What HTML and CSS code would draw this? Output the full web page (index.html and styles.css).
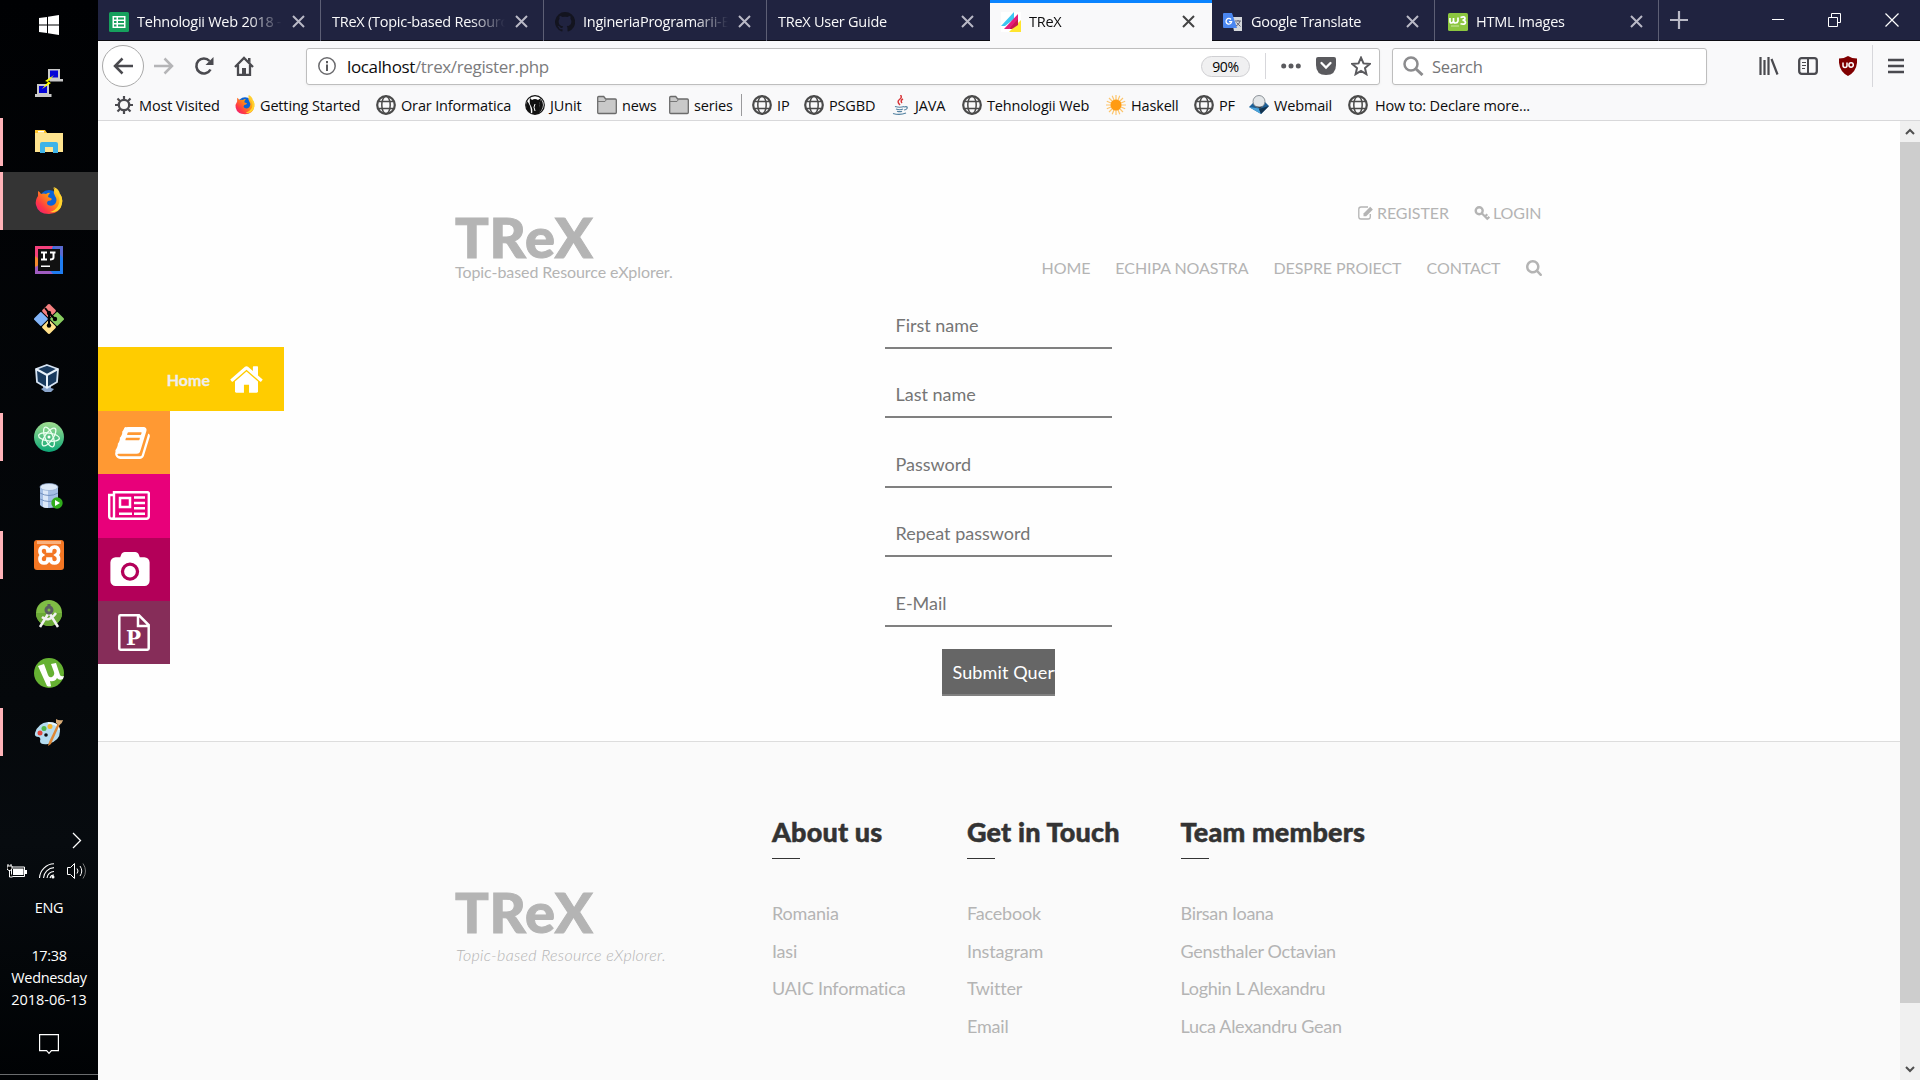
FILE: index.html
```html
<!DOCTYPE html>
<html lang="en">
<head>
<meta charset="utf-8">
<title>TReX</title>
<link rel="stylesheet" href="styles.css">
</head>
<body>
<svg class="defs" aria-hidden="true">
  <symbol id="x" viewBox="0 0 13 13"><path d="M1 1l11 11M12 1L1 12" fill="none" stroke="currentColor" stroke-width="2"/></symbol>
  <symbol id="globe" viewBox="0 0 20 20"><g fill="none" stroke="#4a4a4a"><circle cx="10" cy="10" r="8.800" stroke-width="2.200"/><ellipse cx="10" cy="10" rx="4.200" ry="8.800" stroke-width="1.500"/><path d="M2.500 6.500h15M2.500 13.500h15" stroke-width="1.400"/></g></symbol>
  <symbol id="folder" viewBox="0 0 20 20"><path d="M.7 17.500v-15q0-1 1-1h5l2 2.500h9.600q1 0 1 1v12.500q0 1-1 1H1.700q-1 0-1-1z" fill="#c9c9c9" stroke="#6b6b6b" stroke-width="1.300"/><path d="M1 6.500h7l1.500-2" fill="none" stroke="#777"/></symbol>
  <symbol id="firefox" viewBox="0 0 28 28"><defs><linearGradient id="fx" x1="1" y1="0" x2="0" y2="1"><stop offset="0" stop-color="#fff44f"/><stop offset=".4" stop-color="#ff980e"/><stop offset=".75" stop-color="#ff3647"/><stop offset="1" stop-color="#e31587"/></linearGradient></defs><circle cx="14" cy="13" r="10" fill="#0a63d8"/><path d="M3 4q2 1 3 3 3-1 5 0 3-2 4-1-2 2-2 4 3 1 4 2-1 2-4 2-2 2 0 4 4 2 7-1 3-4 0-8-2-3-1-5 1-3 0-4 5 2 6 7 3 4 2 9-2 11-13 11T1 18Q0 13 3 9z" fill="url(#fx)"/><path d="M18 0q1 4 5 8 3 5 0 11-3 5-8 6 8 1 11-5 3-8-1-13l-1 1q-3-5-6-8z" fill="#ffd42e"/></symbol>
</svg>

<aside class="taskbar">
  <div class="slot start"><svg width="20" height="20" viewBox="0 0 20 20"><path d="M0 3l8-1v7.500H0zM9 1.800L20 0v9.500H9zM0 10.500h8V18l-8-1zM9 10.500h11V20L9 18.300z" fill="#fff"/></svg></div>
  <div class="slot"><svg width="28" height="28" viewBox="0 0 28 28"><path d="M13 0h12v10h3v2.500H15L13 10z" fill="#c9c9c9"/><path d="M15 1.500h8v7h-8z" fill="#0404d8"/><path d="M2 15h12v10h2.500v3H0v-3h2z" fill="#c9c9c9"/><path d="M4 17h8v7H4z" fill="#0404d8"/><path d="M19 6l-9 6 3 1-6 7 9-6-3-1.500z" fill="#ff0"/></svg></div>
  <div class="slot running"><svg width="28" height="24" viewBox="0 0 28 24"><path d="M0 1h9l3 2h16v19H0z" fill="#ffe48f"/><path d="M0 0h10l2 3H0z" fill="#ffc52e"/><path d="M3 1h6v1.500H3z" fill="#fff"/><path d="M5 23V14q0-2 2-2h14q2 0 2 2v9h-5v-6h-8v6z" fill="#3eb3e8"/></svg></div>
  <div class="slot running active"><svg width="28" height="28"><use href="#firefox"/></svg></div>
  <div class="slot"><svg width="28" height="28" viewBox="0 0 28 28"><path d="M0 0h28v28H0z" fill="#1f7cf0"/><path d="M0 0h18l-10 28H0z" fill="#f5417d"/><path d="M0 10l6 5-2 13H0z" fill="#f58a2e"/><path d="M0 21l8-4 10 11H0z" fill="#a05cc0"/><path d="M18 0h10v12z" fill="#5a6ad0"/><path d="M3 3h22v22H3z" fill="#111"/><path d="M6 6.500h6M9 6.500v7M6 13.500h6M15 6.500h5.500M18.500 6.500v5q0 2-3.500 2" stroke="#fff" stroke-width="2" fill="none"/><path d="M6 19.500h9V21H6z" fill="#fff"/></svg></div>
  <div class="slot"><svg width="30" height="30" viewBox="0 0 30 30"><g transform="rotate(45 15 15)"><rect x="4" y="4" width="10.500" height="10.500" rx="1.500" fill="#f58080"/><rect x="15.500" y="4" width="10.500" height="10.500" rx="1.500" fill="#88cc60"/><rect x="4" y="15.500" width="10.500" height="10.500" rx="1.500" fill="#82b4f8"/><rect x="15.500" y="15.500" width="10.500" height="10.500" rx="1.500" fill="#ffe08a"/></g><path d="M15 8v14M15 9l6 6M11 4l4 5" stroke="#000" stroke-width="2"/><circle cx="15" cy="9" r="2.200"/><circle cx="21" cy="15" r="2.200"/><circle cx="15" cy="21.500" r="2.200"/></svg></div>
  <div class="slot vbox"><svg width="26" height="28" viewBox="0 0 26 28"><path d="M9 21h8v3l3 1-3 3h-6l-4-3 2-1z" fill="#8aa5cc"/><path d="M13 1l11 4-1 13-10 6-10-6L2 5z" fill="#193a5e" stroke="#d5e3f3" stroke-width="1.800"/><path d="M2 5l11 6 11-6M13 11v13" fill="none" stroke="#e9f2fb" stroke-width="2"/></svg></div>
  <div class="slot running"><svg width="30" height="30" viewBox="0 0 30 30"><defs><linearGradient id="at" x2="0" y2="1"><stop stop-color="#a0dd90"/><stop offset="1" stop-color="#0da777"/></linearGradient></defs><circle cx="15" cy="15" r="15" fill="url(#at)"/><g fill="none" stroke="#eafff0" stroke-width="1.300"><ellipse cx="15" cy="15" rx="10.500" ry="4" transform="rotate(8 15 15)"/><ellipse cx="15" cy="15" rx="10.500" ry="4" transform="rotate(68 15 15)"/><ellipse cx="15" cy="15" rx="10.500" ry="4" transform="rotate(125 15 15)"/></g><circle cx="15" cy="15" r="1.500" fill="#fff"/></svg></div>
  <div class="slot db"><svg width="24" height="26" viewBox="0 0 24 26"><path d="M1 4v18q2 3 9 3t9-3V4z" fill="#a5bfe5"/><path d="M4 5h5v20q-4 0-5-1z" fill="#dce8f8"/><ellipse cx="10" cy="4" rx="9" ry="3.500" fill="#dde9f8" stroke="#8fa9cf" stroke-width=".7"/><path d="M1 10q9 5 18 0M1 16q9 5 18 0" fill="none" stroke="#7391c0"/><circle cx="18" cy="20" r="5.700" fill="#30ad1c"/><path d="M16 17l5 3-5 3z" fill="#fff"/></svg></div>
  <div class="slot running"><svg width="30" height="30" viewBox="0 0 30 30"><rect width="30" height="30" rx="3" fill="#f37623"/><path d="M3 1h24v3H3z" fill="#f9b07c"/><path d="M10 7c-5 0-5 6-2 8-3 2-3 8 2 8 3 0 4-2 4-4h2.500c0 2 1 4 4 4 5 0 5-6 2-8 3-2 3-8-2-8-3 0-4 2-4 4H14c0-2-1-4-4-4z" fill="none" stroke="#fff" stroke-width="3.600"/></svg></div>
  <div class="slot"><svg width="26" height="28" viewBox="0 0 26 28"><circle cx="13" cy="13" r="13" fill="#7fbd45"/><path d="M0 13h26a13 13 0 0 1-26 0z" fill="#6aa836"/><path d="M12 14L4 27M14 14l8 13M6 17q7 6 14-4" fill="none" stroke="#f1f1f1" stroke-width="2.500"/><circle cx="13" cy="10" r="3" fill="none" stroke="#5b5f60" stroke-width="3"/><path d="M11.500 4h3v4h-3z" fill="#5b5f60"/></svg></div>
  <div class="slot"><svg width="30" height="30" viewBox="0 0 30 30"><circle cx="15" cy="15" r="15" fill="#65b132"/><path d="M4 8l6-2 4 11q1 3 4 2 3-2 2-5l-3-8 5-1 4 12q1 2 4 1l-1 3q-4 2-6-1-2 4-7 3l1 5q-1 1-4 0z" fill="#fff"/></svg></div>
  <div class="slot running"><svg width="30" height="28" viewBox="0 0 30 28"><path d="M14 4q12 0 12 9 0 10-12 13-8 1-8-3 1-3-1-4-5 0-4-4Q4 5 14 4z" fill="#b5dcf0"/><path d="M14 5q10 0 11 7" stroke="#e9f7fd" fill="none" stroke-width="2"/><circle cx="6" cy="15" r="2.500" fill="#e2483d"/><circle cx="10" cy="10.500" r="2.500" fill="#54ba4b"/><circle cx="16" cy="8.500" r="2.500" fill="#f7b52c"/><circle cx="12" cy="17" r="1.800" fill="#0a0c10"/><path d="M24 5l2 1-9 20-3 2 1-4z" fill="#dd8736"/><path d="M22 1q3 2 7 1-1 4-4 5l-3-2z" fill="#d8ab77"/></svg></div>
  <div class="tray">
    <svg class="chev" width="10" height="17" viewBox="0 0 10 17"><path d="M1 1l7.500 7.500L1 16" fill="none" stroke="#fff" stroke-width="1.300"/></svg>
    <div class="trayicons">
      <svg width="20" height="14" viewBox="0 0 20 14"><path d="M4.500 3h13v9.500h-13z" fill="none" stroke="#fff"/><path d="M6 4.500h10.500V11H6z" fill="#fff"/><path d="M18 6h2v4h-2z" fill="#fff"/><path d="M0 2h5v3q-1 1.500-2.500 1.500T0 5zM1 0v2M4 0v2M2.500 6v7h3" fill="#000" stroke="#fff"/></svg>
      <svg width="16" height="16" viewBox="0 0 16 16"><g fill="none" stroke="#fff" stroke-width="1.100"><path d="M.5 15A15 15 0 0 1 15 .8M4.500 15A11 11 0 0 1 15 4.600M8 15a7 7 0 0 1 7-6.500M11 15a4 4 0 0 1 4-3"/></g><circle cx="14" cy="14" r="1.500" fill="#fff"/></svg>
      <svg width="20" height="18" viewBox="0 0 20 18"><path d="M.5 5.500h3l4-4v15l-4-4h-3z" fill="none" stroke="#fff"/><path d="M10 6.500q2 2.500 0 5M13 4q3.500 5 0 10" fill="none" stroke="#fff"/><path d="M16 1.500q5 7.500 0 15" fill="none" stroke="#777"/></svg>
    </div>
    <div class="lang"><span>ENG</span></div>
    <div class="clock"><span>17:38</span><span>Wednesday</span><span class="date">2018-06-13</span></div>
    <svg class="note" width="20" height="21" viewBox="0 0 20 21"><path d="M.600.600h18.800v16h-7l-2.400 2.800-2.400-2.800h-7z" fill="none" stroke="#fff" stroke-width="1.200"/></svg>
  </div>
</aside>

<main class="window">
  <div class="tabs">
    <div class="tab"><svg width="20" height="20" viewBox="0 0 20 20"><rect width="20" height="20" rx="1.500" fill="#16a05d"/><path d="M3.500 4h13v12h-13z" fill="#fff"/><path d="M5 5.500h2.500v2H5zM9 5.500h6v2H9zM5 9h2.500v2H5zM9 9h6v2H9zM5 12.500h2.500v2H5zM9 12.500h6v2H9z" fill="#16a05d"/></svg><span class="label"><span>Tehnologii Web 2018 - </span></span><svg class="cl"><use href="#x"/></svg></div>
    <div class="tab"><span class="label"><span>TReX (Topic-based Resource</span></span><svg class="cl"><use href="#x"/></svg></div>
    <div class="tab"><svg width="20" height="20" viewBox="0 0 16 16"><path d="M8 0a8 8 0 0 0-2.500 15.600c.4 0 .5-.2.500-.4v-1.500c-2.200.5-2.700-1-2.700-1-.4-.9-.9-1.200-.9-1.200-.7-.5.100-.5.100-.5.800.1 1.200.8 1.200.8.700 1.300 1.900.9 2.300.7.100-.5.300-.9.500-1.100-1.800-.2-3.600-.9-3.600-4 0-.9.300-1.600.8-2.100-.1-.2-.4-1 .1-2.100 0 0 .7-.2 2.200.8a7.500 7.500 0 0 1 4 0c1.500-1 2.200-.8 2.200-.8.400 1.100.2 1.900.1 2.100.5.600.8 1.300.8 2.100 0 3.100-1.900 3.800-3.700 4 .3.300.6.800.6 1.500v2.300c0 .2.100.5.600.4A8 8 0 0 0 8 0z" fill="#13141f"/></svg><span class="label"><span>IngineriaProgramarii-E</span></span><svg class="cl"><use href="#x"/></svg></div>
    <div class="tab"><span class="label"><span>TReX User Guide</span></span><svg class="cl"><use href="#x"/></svg></div>
    <div class="tab on"><svg width="20" height="20" viewBox="0 0 20 20"><path d="M0 0h20v20H0z" fill="#fff"/><path d="M13 0v7L4 14H0z" fill="#3ec6f2"/><path d="M17 2v9L8 17H3z" fill="#e51d79"/><path d="M20 8v12H8z" fill="#ffe52e"/><path d="M17 7v6l-6 4-3 0z" fill="#c9174f"/></svg><span class="label"><span>TReX</span></span><svg class="cl"><use href="#x"/></svg></div>
    <div class="tab"><svg width="20" height="20" viewBox="0 0 20 20"><path d="M8 5h11v14H11z" fill="#d5d8dc"/><path d="M1 1h8l5 15H1q-1 0-1-1V2q0-1 1-1z" fill="#4a86f0"/><path d="M8 7.500a2.800 2.800 0 1 0 .6 2.200H6" fill="none" stroke="#fff" stroke-width="1.300"/><path d="M12 9h6M15 8v1M17 9q-1 4-4 5M13.500 10.500l4 4" stroke="#667" fill="none"/></svg><span class="label"><span>Google Translate</span></span><svg class="cl"><use href="#x"/></svg></div>
    <div class="tab last"><svg width="20" height="18" viewBox="0 0 20 18"><rect width="20" height="18" rx="1.500" fill="#8cc63f"/><path d="M2 5v3q0 2 1.500 2T5.500 8V5v3q0 2 2 2T10 8V4.500M12.500 4.500q4-1.500 4.500.7 0 2-2.500 2 3 .3 3 2.300-.5 2.500-5 1.300" fill="none" stroke="#fff" stroke-width="1.700"/><path d="M3 13h8" stroke="#cbe6a5"/></svg><span class="label"><span>HTML Images</span></span><svg class="cl"><use href="#x"/></svg></div>
    <svg class="plus" width="18" height="18" viewBox="0 0 18 18"><path d="M9 0v18M0 9h18" stroke="#b9b9c6" stroke-width="2.200"/></svg>
    <div class="controls">
      <svg width="14" height="14" viewBox="0 0 14 14"><path d="M1 6.500h12" stroke="#fff"/></svg>
      <svg width="14" height="14" viewBox="0 0 14 14"><path d="M.500 4.500h9v9h-9zM3.500 4.500v-4h9v9h-3" fill="none" stroke="#fff"/></svg>
      <svg width="14" height="14" viewBox="0 0 14 14"><path d="M.500.500l13 13M13.500.500l-13 13" stroke="#fff" stroke-width="1.200"/></svg>
    </div>
  </div>

  <div class="nav">
    <div class="back"><svg width="20" height="18" viewBox="0 0 20 18"><path d="M20 9H2M9.500 1.500L2 9l7.500 7.500" fill="none" stroke="#4a4a4f" stroke-width="2.500"/></svg></div>
    <svg class="fwd" width="20" height="18" viewBox="0 0 20 18"><path d="M0 9h18M10.500 1.500L18 9l-7.500 7.500" fill="none" stroke="#b5b5b7" stroke-width="2.500"/></svg>
    <svg class="reload" width="20" height="20" viewBox="0 0 20 20"><path d="M16.500 13.500A7.500 7.500 0 1 1 15.500 5" fill="none" stroke="#4a4a4f" stroke-width="2.600"/><path d="M19.500 1v8h-8z" fill="#4a4a4f"/></svg>
    <svg class="hm" width="20" height="20" viewBox="0 0 20 20"><path d="M1 11L10 2l9 9M4 9v10h12V9" fill="none" stroke="#4a4a4f" stroke-width="2.300"/><path d="M8 19v-7h4v7z" fill="#4a4a4f"/><path d="M14 2h2.500v5L14 4.500z" fill="#4a4a4f"/></svg>
    <div class="url">
      <svg width="18" height="18" viewBox="0 0 18 18"><circle cx="9" cy="9" r="8.200" fill="none" stroke="#6b6b6e" stroke-width="1.500"/><path d="M8 4h2v2.200H8zM8 7.500h2V14H8z" fill="#5b5b5e"/></svg>
      <span class="addr">localhost<i>/trex/register.php</i></span>
      <span class="zoom"><span>90%</span></span>
      <b class="sep"></b>
      <svg class="dots" width="20" height="6" viewBox="0 0 20 6"><g fill="#5a5a5e"><circle cx="2.700" cy="3" r="2.500"/><circle cx="10" cy="3" r="2.500"/><circle cx="17.300" cy="3" r="2.500"/></g></svg>
      <svg class="pocket" width="20" height="18" viewBox="0 0 20 18"><path d="M2 0h16q2 0 2 2v6q0 10-10 10T0 8V2q0-2 2-2z" fill="#5a5a5e"/><path d="M5.500 6l4.500 4.500L14.500 6" fill="none" stroke="#fff" stroke-width="2.300" stroke-linecap="round"/></svg>
      <svg class="star" width="20" height="20" viewBox="0 0 20 20"><path d="M10 1.700l2.500 5.700 6.200.6-4.700 4.100 1.400 6.100L10 15l-5.400 3.200L6 12.100 1.300 8l6.200-.6z" fill="none" stroke="#5a5a5e" stroke-width="2"/></svg>
    </div>
    <div class="search"><svg width="21" height="20" viewBox="0 0 21 20"><circle cx="8" cy="8" r="6.500" fill="none" stroke="#8c8c8e" stroke-width="2.500"/><path d="M12.500 12.500l7 6.500" stroke="#8c8c8e" stroke-width="3"/></svg><span>Search</span></div>
    <svg class="lib" width="20" height="18" viewBox="0 0 20 18"><path d="M1.500 0v18M5.500 3v15M9.500 0v18M12.500 2l6 15.500" stroke="#4a4a4f" stroke-width="2.200"/></svg>
    <svg class="side" width="20" height="18" viewBox="0 0 20 18"><rect x="1.200" y="1.200" width="17.600" height="15.600" rx="2.500" fill="none" stroke="#4a4a4f" stroke-width="2.300"/><path d="M10 1v16" stroke="#4a4a4f" stroke-width="2"/><path d="M4 5.500h4M4 8.500h4M4 11.500h3" stroke="#4a4a4f" stroke-width="1.200"/></svg>
    <svg class="ub" width="18" height="20" viewBox="0 0 18 20"><path d="M9 0q4 2.500 9 2.500 1 12-9 17.500Q-1 14.500 0 2.500 5 2.500 9 0z" fill="#800000"/><path d="M4 6.500v3q0 2 2 2t2-2v-3M14.300 9a2.200 2.200 0 1 1-4.400 0 2.200 2.200 0 1 1 4.400 0" fill="none" stroke="#fff" stroke-width="1.500"/></svg>
    <b class="sep tall"></b>
    <svg class="menu" width="16" height="16" viewBox="0 0 16 16"><path d="M0 2h16M0 8h16M0 14h16" stroke="#4a4a4f" stroke-width="2.500"/></svg>
  </div>

  <div class="marks">
    <div class="m" style="width:121px"><svg viewBox="0 0 20 20"><g stroke="#4a4a4f" fill="none"><circle cx="10" cy="10" r="5.200" stroke-width="2.300"/><path d="M10 1v3M10 16v3M1 10h3M16 10h3M3.500 3.500L6 6M14 14l2.500 2.500M16.500 3.500L14 6M6 14l-2.500 2.500" stroke-width="2.200"/></g></svg><span>Most Visited</span></div>
    <div class="m" style="width:141px"><svg><use href="#firefox"/></svg><span>Getting Started</span></div>
    <div class="m" style="width:149px"><svg><use href="#globe"/></svg><span>Orar Informatica</span></div>
    <div class="m" style="width:72px"><svg viewBox="0 0 20 20"><circle cx="10" cy="10" r="9.300" fill="#fff" stroke="#111" stroke-width="1.200"/><path d="M5 3l2 2q3-2 6 0l3-2q-1 5-2 6 2 5 0 10H7q1-5-1-8Q4 8 5 3z" fill="#111"/><path d="M1 10q0 6 5 8Q6 10 2 6zM16 4q4 6 0 12l-2 2q1-6 0-9z" fill="#111"/><path d="M10 9q-2 3 0 7" stroke="#fff" fill="none"/></svg><span>JUnit</span></div>
    <div class="m" style="width:72px"><svg><use href="#folder"/></svg><span>news</span></div>
    <div class="m" style="width:72px"><svg><use href="#folder"/></svg><span>series</span></div>
    <b class="sep dark"></b>
    <div class="m" style="width:52px"><svg><use href="#globe"/></svg><span>IP</span></div>
    <div class="m" style="width:86px"><svg><use href="#globe"/></svg><span>PSGBD</span></div>
    <div class="m" style="width:72px"><svg viewBox="0 0 20 20"><path d="M10.500 0q2 2.500-1 4.500T10 10M13 4q-3 1.500-1 4" fill="none" stroke="#d8373a" stroke-width="1.500"/><path d="M5 11.500q5 1.500 9 0M6 14q4 1.500 7 0M7 16.200q3 1 5 0M3 18.500q7 2 13-.5M14 12q4-1 3 1.500-1 1.500-3 1.500" fill="none" stroke="#5382a1" stroke-width="1.200"/></svg><span>JAVA</span></div>
    <div class="m" style="width:144px"><svg><use href="#globe"/></svg><span>Tehnologii Web</span></div>
    <div class="m" style="width:88px"><svg viewBox="0 0 20 20"><path d="M10 0v20M0 10h20M3 3l14 14M17 3L3 17M6.200.8l7.600 18.400M13.800.8L6.200 19.200M.8 6.200l18.400 7.600M.8 13.800l18.400-7.600" stroke="#fdc56c" stroke-width="1.200"/><circle cx="10" cy="10" r="5.500" fill="#ff9b12"/></svg><span>Haskell</span></div>
    <div class="m" style="width:55px"><svg><use href="#globe"/></svg><span>PF</span></div>
    <div class="m" style="width:99px"><svg viewBox="0 0 20 20"><path d="M0 12l6-6h9l5 5-8 8z" fill="#1d5f96"/><path d="M0 12l10 1.500L12 19z" fill="#4aa3da"/><path d="M20 11l-10 3 2 5z" fill="#12334f"/><circle cx="10" cy="6.500" r="6" fill="#e3e6e8" stroke="#737b82" stroke-width=".8"/><path d="M5 10.500l6 3 5-4q-3 4-11 1z" fill="#333e48"/></svg><span>Webmail</span></div>
    <div class="m wide"><svg><use href="#globe"/></svg><span>How to: Declare more...</span></div>
  </div>

  <div class="view">
    <div class="page">
      <header class="head">
        <div class="brand"><h1><span>TReX</span></h1><p><span>Topic-based Resource eXplorer.</span></p></div>
        <div class="menus">
          <nav class="account">
            <a><svg width="16" height="14" viewBox="0 0 16 14"><path d="M12.300 8v2.800q0 2.200-2.200 2.200H3Q.800 13 .800 10.800V3.200Q.800 1 3 1h7" fill="none" stroke="currentColor" stroke-width="1.300"/><path d="M5.500 7.500L12.200.800l2.700 2.700-6.700 6.700H5.500z" fill="currentColor"/></svg><span>REGISTER</span></a>
            <a><svg width="16" height="15" viewBox="0 0 16 15"><circle cx="5.200" cy="4.700" r="3.500" fill="none" stroke="currentColor" stroke-width="2.400"/><path d="M7.500 7l6.500 6.500M11 10.500l2.300-2.300M13.300 12.800l2-2" stroke="currentColor" stroke-width="2.200"/></svg><span>LOGIN</span></a>
          </nav>
          <nav class="main">
            <a><span>HOME</span></a><a><span>ECHIPA NOASTRA</span></a><a><span>DESPRE PROIECT</span></a><a><span>CONTACT</span></a>
            <a><svg width="16" height="16" viewBox="64 128 1664 1664"><path d="M1216 832q0-185-131.500-316.500t-316.500-131.500-316.500 131.500-131.500 316.500 131.500 316.500 316.500 131.500 316.500-131.500 131.500-316.500zm512 832q0 52-38 90t-90 38q-54 0-90-38l-343-342q-179 124-399 124-143 0-273.500-55.500t-225-150-150-225-55.500-273.500 55.500-273.500 150-225 225-150 273.500-55.500 273.500 55.500 225 150 150 225 55.500 273.500q0 220-124 399l343 343q37 37 37 90z" fill="currentColor"/></svg></a>
          </nav>
        </div>
      </header>

      <form class="register">
        <div class="field"><span>First name</span></div>
        <div class="field"><span>Last name</span></div>
        <div class="field"><span>Password</span></div>
        <div class="field"><span>Repeat password</span></div>
        <div class="field"><span>E-Mail</span></div>
        <div class="field submit"><span>Submit Query</span></div>
      </form>

      <footer class="foot">
        <div class="inner">
          <div class="fbrand"><h2><span>TReX</span></h2><p><span>Topic-based Resource eXplorer.</span></p></div>
          <div class="col about"><h3><span>About us</span></h3><ul><li><span>Romania</span></li><li><span>Iasi</span></li><li><span>UAIC Informatica</span></li></ul></div>
          <div class="col touch"><h3><span>Get in Touch</span></h3><ul><li><span>Facebook</span></li><li><span>Instagram</span></li><li><span>Twitter</span></li><li><span>Email</span></li></ul></div>
          <div class="col team"><h3><span>Team members</span></h3><ul><li><span>Birsan Ioana</span></li><li><span>Gensthaler Octavian</span></li><li><span>Loghin L Alexandru</span></li><li><span>Luca Alexandru Gean</span></li></ul></div>
        </div>
      </footer>

      <nav class="social">
        <a class="s1"><span>Home</span><svg width="33" height="27" viewBox="70 240 1652 1310" preserveAspectRatio="none"><path d="M1472 992v480q0 26-19 45t-45 19h-384v-384h-256v384h-384q-26 0-45-19t-19-45v-480q0-1 .5-3t.5-3l575-474 575 474q1 2 1 6zm223-69l-62 74q-8 9-21 11h-3q-13 0-21-7l-692-577-692 577q-12 8-24 7-13-2-21-11l-62-74q-8-10-7-23.500t11-21.500l719-599q32-26 76-26t76 26l244 204v-195q0-14 9-23t23-9h192q14 0 23 9t9 23v408l219 182q10 8 11 21.500t-7 23.500z" fill="#fff"/></svg></a>
        <a class="s2"><svg width="35" height="32" viewBox="60 128 1672 1536"><path d="M1703 478q40 57 18 129l-275 906q-19 64-76.500 107.500t-122.500 43.500h-923q-77 0-148.500-53.500t-99.500-131.500q-24-67-2-127 0-4 3-27t4-37q1-8-3-21.500t-3-19.500q2-11 8-21t16.500-23.500 16.500-23.500q23-38 45-91.500t30-91.500q3-10 .5-30t-.5-28q3-11 17-28t17-23q21-36 42-92t25-90q1-9-2.500-32t.5-28q4-13 22-30.500t22-22.500q19-26 42.500-84.500t27.500-96.500q1-8-3-25.500t-2-26.500q2-8 9-18t18-23 17-21q8-12 16.500-30.500t15-35 16-36 19.500-32 26.500-23.500 36-11.500 47.500 5.500l-1 3q38-9 51-9h761q74 0 114 56t18 130l-274 906q-36 119-71.500 153.500t-128.500 34.500h-869q-27 0-38 15-11 16-1 43 24 70 144 70h923q29 0 56-15.500t35-41.500l300-987q7-22 5-57 38 15 59 43zm-1064 2q-4 13 2 22.500t20 9.500h608q13 0 25.500-9.500t16.500-22.500l21-64q4-13-2-22.500t-20-9.500h-608q-13 0-25.500 9.500t-16.500 22.500zm-83 256q-4 13 2 22.500t20 9.500h608q13 0 25.500-9.500t16.500-22.500l21-64q4-13-2-22.500t-20-9.500h-608q-13 0-25.500 9.500t-16.500 22.500z" fill="#fff"/></svg></a>
        <a class="s3"><svg width="42" height="29" viewBox="0 0 42 29"><path d="M6 1.200h33.500q1.300 0 1.300 1.300v22.800q0 2.500-2.500 2.500H4q-2.800 0-2.800-2.500V4H6zM6 1v24q0 2.800-2 2.800" fill="none" stroke="#fff" stroke-width="2.400"/><path d="M12 7h10v9H12z" fill="none" stroke="#fff" stroke-width="2.500"/><path d="M26 6.500h11M26 12h11M26 17.300h11M26 22.800h11M11 22.800h13" stroke="#fff" stroke-width="2.400"/></svg></a>
        <a class="s4"><svg width="40" height="34" viewBox="0 0 1920 1664"><path d="M960 672q119 0 203.500 84.500t84.500 203.500-84.500 203.500-203.500 84.500-203.500-84.500-84.500-203.500 84.500-203.500 203.500-84.500zm704-416q106 0 181 75t75 181v896q0 106-75 181t-181 75h-1408q-106 0-181-75t-75-181v-896q0-106 75-181t181-75h224l51-136q19-49 69.500-84.500t103.500-35.500h512q53 0 103.500 35.500t69.500 84.500l51 136h224zm-704 1152q185 0 316.500-131.500t131.500-316.500-131.500-316.500-316.500-131.500-316.500 131.500-131.500 316.500 131.500 316.500 316.500 131.500z" fill="#fff"/></svg></a>
        <a class="s5"><svg width="32" height="37" viewBox="0 0 32 37"><path d="M2.500 1.300H21L30.700 11v23.500q0 1.200-1.200 1.200h-27q-1.200 0-1.200-1.200v-32q0-1.200 1.200-1.200zM20 1.500V12h10.500" fill="none" stroke="#fff" stroke-width="2.500"/><text x="15.500" y="31" text-anchor="middle" class="pglyph">P</text></svg></a>
      </nav>
    </div>
    <div class="scroll"><svg width="10" height="7" viewBox="0 0 10 7"><path d="M1 6l4-4 4 4" fill="none" stroke="#505050" stroke-width="2"/></svg><div class="thumb"></div><svg class="down" width="10" height="7" viewBox="0 0 10 7"><path d="M1 1l4 4 4-4" fill="none" stroke="#505050" stroke-width="2"/></svg></div>
  </div>
</main>
</body>
</html>
```
FILE: styles.css
```css
* { box-sizing: border-box; }
body { margin: 0; width: 1920px; height: 1080px; overflow: hidden; display: flex; font-family: "Open Sans", "Noto Sans", sans-serif; font-size: 14.5px; background: #fff; }
svg { display: block; flex: none; }
h1, h2, h3, p, ul { margin: 0; padding: 0; list-style: none; }
.defs { position: absolute; width: 0; height: 0; }

.taskbar { width: 98px; height: 1080px; flex: none; background: linear-gradient(#000103, #05080b 65%, #070b0f 78%, #000204); display: flex; flex-direction: column; color: #fff; }
.slot { height: 59px; flex: none; display: flex; align-items: center; justify-content: center; position: relative; padding-bottom: 2px; }
.start { height: 54px; padding-bottom: 5px; }
.vbox { padding-right: 4px; }
.db { padding-left: 4px; }
.running::before { content: ""; position: absolute; left: 0; top: 5px; width: 3px; height: 48px; background: #ffb3b8; }
.active { background: #343434; height: 58px; margin-bottom: 1px; padding-bottom: 0; }
.active::before { top: 0; height: 58px; }
.tray { margin-top: 70px; height: 243px; display: flex; flex-direction: column; border-bottom: 1px solid #6a6c6e; letter-spacing: -.35px; }
.chev { margin-left: 72px; flex: none; }
.trayicons { display: flex; align-items: center; margin: 13px 0 0 7px; gap: 12px; height: 18px; flex: none; }
.lang { margin-top: 17px; height: 22px; line-height: 22px; text-align: center; }
.clock { margin-top: 26px; text-align: center; line-height: 22px; display: flex; flex-direction: column; align-items: center; }
.date { letter-spacing: 0; }
.note { margin: 23px auto 0; }

.window { flex: 1; display: flex; flex-direction: column; min-width: 0; }
.tabs { height: 41px; background: #202340; display: flex; align-items: center; color: #f9f9fa; letter-spacing: -.25px; border-bottom: 1px solid #0c0c12; }
.tab { width: 223px; height: 41px; flex: none; display: flex; align-items: center; padding: 3px 15px 0 11px; border-right: 1px solid #5d5f75; gap: 8px; color: #f9f9fa; }
.tab:nth-child(4) { border-right: 0; padding-right: 16px; }
.tab.on { background: #f9f9fa; color: #0c0c0d; border-top: 3px solid #0a84ff; padding-top: 0; border-right: 0; padding-right: 17px; width: 222px; }
.tab.last { padding-left: 13px; width: 224px; }
.label { flex: 1; overflow: hidden; white-space: nowrap; line-height: 24px; -webkit-mask-image: linear-gradient(90deg, #000 calc(100% - 36px), transparent calc(100% - 2px)); mask-image: linear-gradient(90deg, #000 calc(100% - 36px), transparent calc(100% - 2px)); }
.cl { width: 13px; height: 13px; color: #b9b9c6; }
.on .cl { color: #444; }
.plus { margin-left: 11px; }
.controls { margin-left: auto; display: flex; gap: 43px; padding-right: 21px; }

.nav { height: 49px; flex: none; background: #f9f9fa; display: flex; align-items: center; padding: 1px 16px 0 4px; }
.back { width: 42px; height: 42px; border: 1px solid #a9a9a9; border-radius: 50%; background: #fff; display: flex; align-items: center; justify-content: center; }
.fwd { margin-left: 10px; }
.reload { margin-left: 20px; }
.hm { margin-left: 20px; }
.url, .search { height: 37px; background: #fff; border: 1px solid #bebebe; border-radius: 3px; box-shadow: 0 1px 3px #0000000d; display: flex; align-items: center; }
.url { width: 1074px; margin-left: 52px; padding: 0 8px 0 11px; }
.addr { margin-left: 11px; font-size: 17px; letter-spacing: -.36px; color: #0c0c0d; }
.addr i { font-style: normal; color: #7b7b7d; }
.zoom { margin-left: auto; width: 49px; height: 21px; border: 1px solid #cfcfd2; border-radius: 11px; background: #f0f0f1; text-align: center; line-height: 19px; font-size: 14px; letter-spacing: -.3px; }
.sep { width: 1px; height: 26px; background: #d7d7db; margin-left: 15px; flex: none; }
.dots { margin-left: 15px; }
.pocket { margin-left: 15px; }
.star { margin-left: 15px; }
.search { width: 315px; margin-left: 12px; padding-left: 10px; }
.search span { margin-left: 8px; font-size: 16.5px; letter-spacing: -.3px; color: #757577; }
.lib { margin-left: 52px; }
.side { margin-left: 19px; }
.ub { margin-left: 21px; }
.tall { height: 42px; }
.menu { margin-left: auto; }

.marks { height: 31px; flex: none; background: #f9f9fa; border-bottom: 1px solid #d8d8da; display: flex; align-items: center; padding: 0 0 1px 16px; color: #0c0c0d; letter-spacing: -.16px; }
.m { display: flex; align-items: center; gap: 5px; white-space: nowrap; flex: none; }
.m svg { width: 20px; height: 20px; }
.m span { padding-top: 1px; }
.wide { gap: 7px; }
.dark { background: #9a9a9c; height: 22px; margin: 0 10px 0 0; }

.view { flex: 1; display: flex; min-height: 0; }
.page { flex: 1; position: relative; display: flex; flex-direction: column; font-family: Lato, sans-serif; color: #b4b4b4; background: #fefefe; }
.head { width: 1088px; margin: 0 auto; height: 181px; display: flex; justify-content: space-between; flex: none; }
.brand { padding-top: 83px; }
.brand h1, .fbrand h2 { font-size: 56px; font-weight: 900; line-height: 66px; letter-spacing: .8px; -webkit-text-stroke: 1px #b4b4b4; }
.brand h1 { height: 60px; }
.brand p { font-size: 16px; line-height: 20px; margin-top: -2px; letter-spacing: -.07px; }
.menus { display: flex; flex-direction: column; align-items: flex-end; font-size: 16px; padding: 82px 1.500px 0 0; letter-spacing: -.07px; }
.menus nav { display: flex; height: 20px; line-height: 20px; }
.menus a { display: flex; align-items: center; gap: 3px; }
.account { gap: 25px; margin-bottom: 35px; }
.main { gap: 25px; }

.register { display: flex; flex-direction: column; align-items: center; gap: 22.400px; height: 439px; flex: none; padding-right: 2px; }
.field { width: 227px; height: 47px; flex: none; border-bottom: 2px solid #808080; padding-left: 11px; font-size: 18px; line-height: 46px; color: #757575; white-space: nowrap; overflow: hidden; }
.submit { width: 113px; background: #666; color: #fff; letter-spacing: .12px; }

.foot { flex: 1; background: #fafafa; border-top: 1px solid #ddd; }
.inner { width: 1088px; margin: 0 auto; display: flex; padding-top: 72px; }
.fbrand { width: 317px; padding-top: 65px; }
.fbrand p { font-size: 16px; font-weight: 300; font-style: italic; line-height: 20px; padding-left: 1px; letter-spacing: .3px; }
.col h3 { font-size: 27px; font-weight: 900; line-height: 36px; color: #333; height: 45px; white-space: nowrap; letter-spacing: .17px; -webkit-text-stroke: .5px #333; }
.col h3::after { content: ""; display: block; width: 28px; height: 1px; background: #333; margin-top: 8px; }
.about { width: 195px; }
.touch { width: 213.500px; }
.col ul { padding-top: 36px; font-size: 18px; line-height: 37.650px; letter-spacing: -.18px; }
.team ul { letter-spacing: -.3px; }

.social { position: absolute; left: 0; top: 226px; display: flex; flex-direction: column; }
.social a { width: 72px; height: 63.300px; display: flex; align-items: center; justify-content: flex-end; padding-right: 20px; }
.social .s1 { width: 186px; height: 64px; background: #fc0; padding-right: 21px; gap: 20px; font-size: 16px; font-weight: 700; color: #eee; -webkit-text-stroke: .3px #eee; }
.s2 { background: #ff9933; }
.s3 { background: #e8007a; }
.s4 { background: #b30059; }
.s5 { background: #862d59; }
.pglyph { font: bold 20px "DejaVu Serif", serif; fill: #fff; }

.scroll { width: 20px; background: #f0f0f0; display: flex; flex-direction: column; align-items: center; padding-top: 7px; }
.thumb { width: 20px; height: 861px; background: #cdcdcd; margin-top: 7px; }
.down { margin-top: auto; margin-bottom: 7px; }
```
